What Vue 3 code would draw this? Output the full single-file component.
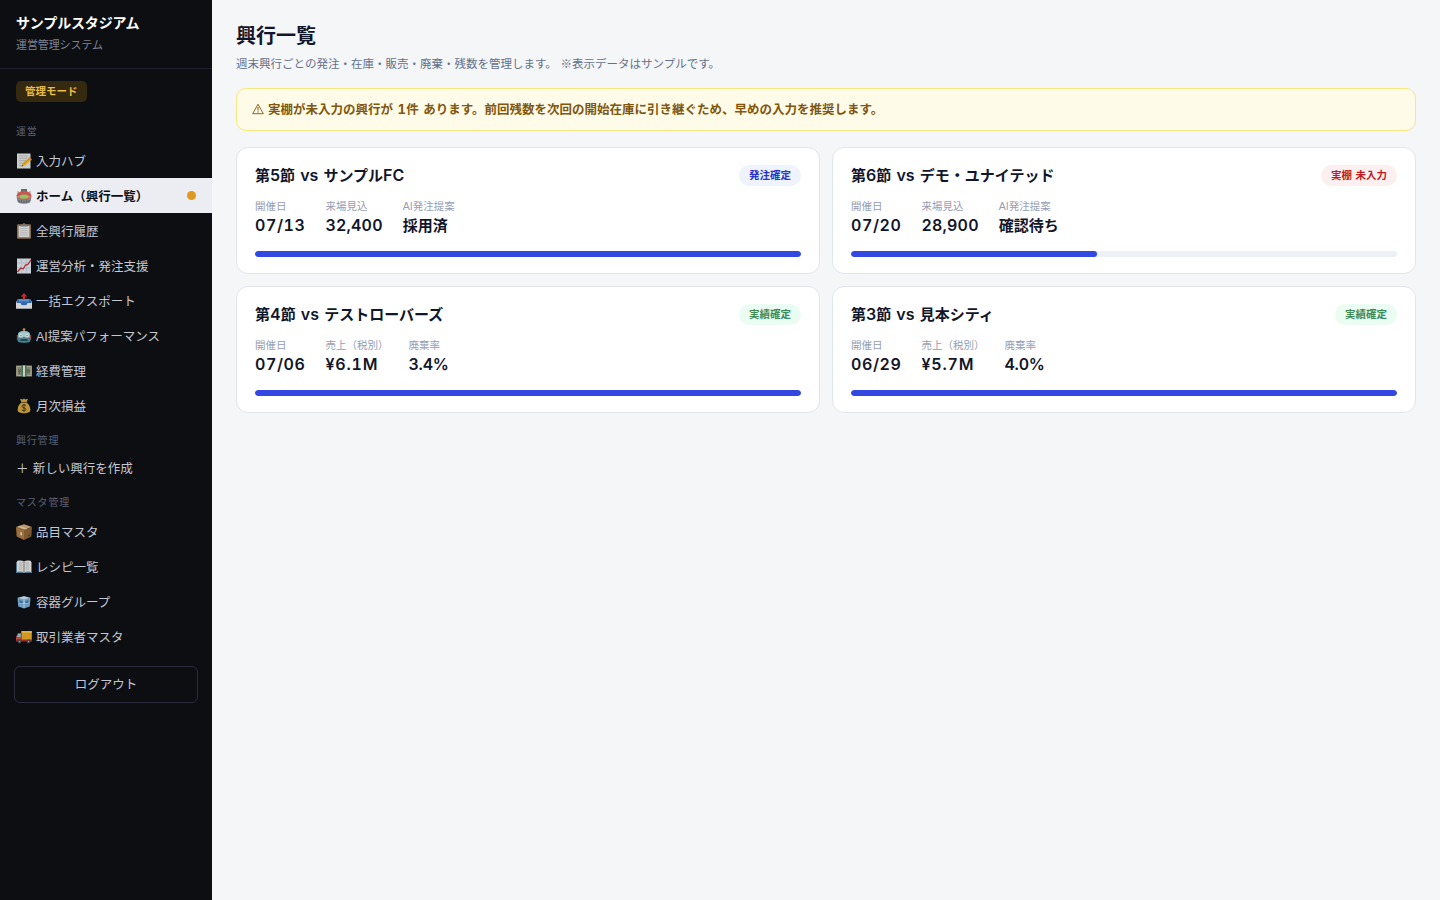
<script setup>
// 英数字だけ別書体にするため文字列を分割する
const split = (text) => text.match(/[\x20-\x7e¥]+|[^\x20-\x7e¥]+/g).map((t) => ({
  t,
  latin: /^[\x20-\x7e¥]/.test(t)
}));

// 値の種類ごとに字間を変える
const valueKind = (value) => {
  if (value.includes('/')) return 'date';
  if (value.startsWith('¥')) return 'money';
  return value.endsWith('%') ? 'rate' : '';
};

const navGroups = [
  {
    label: '運営',
    items: [
      { icon: 'memo', text: '入力ハブ' },
      { icon: 'stadium', text: 'ホーム（興行一覧）', active: true },
      { icon: 'clipboard', text: '全興行履歴' },
      { icon: 'chart', text: '運営分析・発注支援' },
      { icon: 'outbox', text: '一括エクスポート' },
      { icon: 'robot', text: 'AI提案パフォーマンス' },
      { icon: 'yen', text: '経費管理' },
      { icon: 'bag', text: '月次損益' }
    ]
  },
  {
    label: '興行管理',
    items: [{ text: '＋ 新しい興行を作成' }]
  },
  {
    label: 'マスタ管理',
    items: [
      { icon: 'box', text: '品目マスタ' },
      { icon: 'book', text: 'レシピ一覧' },
      { icon: 'ice', text: '容器グループ' },
      { icon: 'truck', text: '取引業者マスタ' }
    ]
  }
];

const events = [
  {
    title: '第5節 vs サンプルFC',
    badge: '発注確定',
    tone: 'blue',
    progress: 100,
    stats: [['開催日', '07/13'], ['来場見込', '32,400'], ['AI発注提案', '採用済']]
  },
  {
    title: '第6節 vs デモ・ユナイテッド',
    badge: '実棚 未入力',
    tone: 'red',
    progress: 45,
    stats: [['開催日', '07/20'], ['来場見込', '28,900'], ['AI発注提案', '確認待ち']]
  },
  {
    title: '第4節 vs テストローバーズ',
    badge: '実績確定',
    tone: 'green',
    progress: 100,
    stats: [['開催日', '07/06'], ['売上（税別）', '¥6.1M'], ['廃棄率', '3.4%']]
  },
  {
    title: '第3節 vs 見本シティ',
    badge: '実績確定',
    tone: 'green',
    progress: 100,
    stats: [['開催日', '06/29'], ['売上（税別）', '¥5.7M'], ['廃棄率', '4.0%']]
  }
];
</script>

<template>
  <div class="layout">
    <aside class="sidebar">
      <div class="brand">
        <div class="brand-name">サンプルスタジアム</div>
        <div class="brand-sub">運営管理システム</div>
      </div>
      <div class="mode-row"><span class="mode">管理モード</span></div>

      <nav v-for="group in navGroups" :key="group.label">
        <div class="nav-label">{{ group.label }}</div>
        <a
          v-for="item in group.items"
          :key="item.text"
          class="nav-item"
          :class="{ active: item.active, plain: !item.icon }"
        >
          <svg v-if="item.icon" class="icon" viewBox="0 0 16 16">
            <g v-if="item.icon === 'memo'">
              <path d="M1 .5h13.5v15H1z" fill="#dcdedc" />
              <path d="M3 3h9M3 5.3h8M3 7.6h7M3 10h4M3 12.5h3" stroke="#a3a8aa" stroke-width=".7" />
              <path d="M5.5 13.5l1-3.2 6-5.3 2.3 2.5-6 5.3z" fill="#eeb82c" />
              <path d="M6.8 11.6l6.5-5.8" stroke="#b77b14" stroke-width=".6" />
              <path d="M12.5 5l1.3-1 2.2 2.4-1.2 1.1z" fill="#dc7b75" />
              <path d="M5.5 13.5l.5-1.6 1.2 1.2z" fill="#333" />
            </g>
            <g v-else-if="item.icon === 'stadium'">
              <path d="M5 1h6v4H5z" fill="#59645a" />
              <path d="M2 3v3M14 3v3" stroke="#8a918f" />
              <path d="M.7 7.500c0 4 .6 6.800 2.300 7.400 3 1 7 1 10 0 1.700-.6 2.300-3.400 2.300-7.400z" fill="#777b80" />
              <ellipse cx="8" cy="7.300" rx="7.300" ry="4.300" fill="#c94b43" />
              <path d="M1 8.500c2-2 12-2 14 0-2 3-12 3-14 0z" fill="#e26a52" />
              <ellipse cx="8" cy="8.400" rx="4.300" ry="2" fill="#7bc957" />
              <path d="M3 12v2.300M5.500 12.500V15M8 12.700v2.500M10.500 12.500V15M13 12v2.300" stroke="#44494e" stroke-width=".8" />
            </g>
            <g v-else-if="item.icon === 'clipboard'">
              <rect x="1" y="1.200" width="14" height="14.500" rx="1" fill="#94764d" />
              <path d="M2.600 3h10.800v11.200H2.600z" fill="#dededf" />
              <path d="M4.500 5.500h7M4.500 7.500h7M4.500 9.500h7M4.500 11.500h7" stroke="#c2c3c6" stroke-width=".7" />
              <path d="M4.500 3.500V2l2-.6C6.800-.2 9.200-.2 9.500 1.400l2 .6v1.500z" fill="#7c8285" />
            </g>
            <g v-else-if="item.icon === 'chart'">
              <path d="M1 .5h14v15H1z" fill="#d8e0e8" />
              <path d="M1 5h14M1 10h14M5.500.5v15M10.500.5v15" stroke="#b1c1cf" stroke-width=".6" />
              <path d="M1.500 14l3.200-4 2.500 1L9.500 7l2.300-.5L15 1.800" fill="none" stroke="#bf2f38" stroke-width="1.300" />
            </g>
            <g v-else-if="item.icon === 'outbox'">
              <path d="M0 9l2-3h12l2 3v6.500H0z" fill="#d9dde1" />
              <path d="M1.500 6h13l1 4-3.500.5-1.500 2h-5l-1.500-2L.5 10z" fill="#366fbd" />
              <path d="M3 6h10v2.500H3z" fill="#5d9de1" />
              <path d="M0 10h4.500l1.200 2.300h4.600l1.200-2.300H16v5.500H0z" fill="#e5e8e9" />
              <path d="M8 0l3.200 3.400H9.300v3H6.700v-3H4.800z" fill="#d52d30" />
            </g>
            <g v-else-if="item.icon === 'robot'">
              <circle cx="8" cy="1.600" r="1.300" fill="#e3a32d" />
              <path d="M.8 7h1.600v5H.8zM13.600 7h1.600v5h-1.600z" fill="#b43d3e" />
              <path d="M2 6c.5-4.400 11.500-4.400 12 0l.4 7c-.5 2.500-12.300 2.500-12.800 0z" fill="#4c8996" />
              <path d="M2.300 5.600c1.500-3.600 9.900-3.600 11.400 0v3.800H2.300z" fill="#abd7dd" />
              <circle cx="5" cy="7.600" r="1.800" fill="#e8f4f2" />
              <circle cx="11" cy="7.600" r="1.800" fill="#e8f4f2" />
              <circle cx="5" cy="7.600" r=".7" fill="#356" />
              <circle cx="11" cy="7.600" r=".7" fill="#356" />
              <path d="M7.200 10h1.600l-.8-2z" fill="#d84738" />
              <path d="M4.500 12h7" stroke="#213e48" stroke-width="1.500" />
            </g>
            <g v-else-if="item.icon === 'yen'">
              <path d="M0 2.500h16v11H0z" fill="#8f9078" />
              <path d="M1 3.500h14v9H1z" fill="none" stroke="#c1bea0" stroke-width=".8" />
              <path d="M5.500 2.500h5v11h-5z" fill="#437f5f" />
              <path d="M7 2.500h2v11H7z" fill="#dce3d1" />
              <circle cx="12.200" cy="8" r="2" fill="#68705e" />
              <path d="M2 6l1.500 2L5 6M3.500 8v3M2.200 8.700h2.600" fill="none" stroke="#505847" stroke-width=".7" />
            </g>
            <g v-else-if="item.icon === 'bag'">
              <path d="M5.500 4.500L4 .8 6.500 1.500 8 .5l1.500 1 2.500-.7-1.500 3.700c3 2 4 5 3.800 8-.2 3.600-12.400 3.600-12.600 0-.2-3 .8-6 3.800-8z" fill="#cda13c" />
              <path d="M5 4.500h6" stroke="#75581d" stroke-width="1.100" />
              <path d="M10 7.700C8.500 6 6 6.600 6 8.300c0 2 4 1.200 4 3.100 0 1.700-2.800 2-4.200.4M8 6v7.800" fill="none" stroke="#493b23" stroke-width="1" />
            </g>
            <g v-else-if="item.icon === 'box'">
              <path d="M0 3l8-2.700L16 3l-8 3z" fill="#caa471" />
              <path d="M0 3l8 3v10l-7.300-3.400z" fill="#a9773e" />
              <path d="M16 3L8 6v10l7.300-3.400z" fill="#886034" />
              <path d="M3.500 1.800L11.400 4.700l-1.800.7L1.800 2.400z" fill="#e2caa2" />
              <path d="M4.200 8l1.800.6v3L4.200 11z" fill="#dbcbb3" />
              <path d="M12 11l2-.8v1.700l-2 .9z" fill="#60462b" />
            </g>
            <g v-else-if="item.icon === 'book'">
              <path d="M0 3h16v11H0z" fill="#527e9d" />
              <path d="M1 2c3-.8 5.500-.6 7 .5 1.500-1.100 4-1.300 7-.5v11c-3-.7-5.500-.5-7 .8-1.500-1.300-4-1.500-7-.8z" fill="#e2e3df" />
              <path d="M8 2.500v11" stroke="#777c7b" stroke-width="1" />
              <path d="M3 4h3.500M3 6h3.500M3 8h3.500M3 10h3.500M9.500 4H13M9.500 6H13M9.500 8H13M9.500 10H13" stroke="#a5aaa9" stroke-width=".7" />
            </g>
            <g v-else-if="item.icon === 'ice'">
              <path d="M1.500 3.800L8 2l6.500 1.800-.7 8.700L8 14.500l-5.800-2z" fill="#78a9ce" />
              <path d="M2 4l6 1.500L14 4 8 2.500z" fill="#c4ddea" />
              <path d="M8 5.500v8.500M3 9.500l10-.5" stroke="#b7d8ec" stroke-width="1" />
              <path d="M3.500 6.200l3 .8v2.500l-2.700-.5zM9.500 7l3-.8-.2 2.500-2.800.6z" fill="#3f76a5" />
            </g>
            <g v-else>
              <path d="M5.500 2h10.300v9.500H5.500z" fill="#e1a326" />
              <path d="M5.500 2h10.300v2H5.500z" fill="#f2bd3e" />
              <path d="M2 4h4v8H0V8z" fill="#cb4938" />
              <path d="M2.200 5h2.500v3H.9z" fill="#8ec4cf" />
              <path d="M0 10.500h16v2H0z" fill="#a62e28" />
              <circle cx="3.500" cy="12.500" r="1.900" fill="#454448" />
              <circle cx="12.500" cy="12.500" r="1.900" fill="#454448" />
              <circle cx="3.500" cy="12.500" r=".8" fill="#aaa" />
              <circle cx="12.500" cy="12.500" r=".8" fill="#aaa" />
            </g>
          </svg>
          <span class="nav-text"><span v-for="(p, i) in split(item.text)" :key="i" :class="{ ai: p.latin && p.t.trim() }">{{ p.t }}</span></span>
          <span v-if="item.active" class="dot"></span>
        </a>
      </nav>

      <button class="logout">ログアウト</button>
    </aside>

    <main class="main">
      <h1>興行一覧</h1>
      <p class="lead">週末興行ごとの発注・在庫・販売・廃棄・残数を管理します。 ※表示データはサンプルです。</p>

      <div class="notice">
        <svg class="warn" viewBox="0 0 12 12">
          <path d="M6 1.200L11.300 10.700H.7z" fill="none" stroke="currentColor" stroke-width=".9" stroke-linejoin="round" />
          <path d="M6 4v3.600M6 8.400v1.200" stroke="currentColor" stroke-width="1" />
        </svg>
        <span>実棚が未入力の興行が <span class="num">1</span>件 あります。前回残数を次回の開始在庫に引き継ぐため、早めの入力を推奨します。</span>
      </div>

      <div class="cards">
        <section v-for="ev in events" :key="ev.title" class="card">
          <div class="card-head">
            <h2><span v-for="(p, i) in split(ev.title)" :key="i" :class="{ latin: p.latin }">{{ p.t }}</span></h2>
            <span class="badge" :class="ev.tone">{{ ev.badge }}</span>
          </div>
          <div class="stats">
            <div v-for="[label, value] in ev.stats" :key="label">
              <div class="stat-label"><span v-for="(p, i) in split(label)" :key="i" :class="{ ai: p.latin }">{{ p.t }}</span></div>
              <div class="stat-value" :class="valueKind(value)"><span v-for="(p, i) in split(value)" :key="i" :class="{ latin: p.latin }">{{ p.t }}</span></div>
            </div>
          </div>
          <div class="track">
            <div class="fill" :style="{ width: ev.progress + '%' }"></div>
          </div>
        </section>
      </div>
    </main>
  </div>
</template>

<style>
body {
  margin: 0;
  background: #f4f6f8;
}
</style>

<style scoped>
.layout {
  display: flex;
  min-height: 100vh;
  font-family: "Noto Sans CJK JP", "Liberation Sans", sans-serif;
  color: #12162a;
}

.sidebar {
  width: 212px;
  flex-shrink: 0;
  background: #0d0e12;
  color: #c3c7d3;
}

.brand {
  height: 69px;
  box-sizing: border-box;
  padding: 12px 16px 0;
  border-bottom: 1px solid #1e1f2e;
}

.brand-name {
  font-size: 14px;
  line-height: 21px;
  font-weight: 700;
  letter-spacing: -0.15px;
  color: #fff;
}

.brand-sub {
  margin-top: 3px;
  font-size: 11px;
  line-height: 17px;
  letter-spacing: -0.1px;
  color: #7c8193;
}

.mode-row {
  display: flex;
  padding: 12px 16px 0;
}

.mode {
  padding: 2px 9px 4px;
  border-radius: 5px;
  background: #352a10;
  color: #e8bc48;
  font-size: 10.5px;
  line-height: 15px;
  font-weight: 700;
}

.nav-label {
  height: 29px;
  box-sizing: border-box;
  padding: 9px 16px 0;
  font-size: 10px;
  line-height: 15px;
  letter-spacing: 0.8px;
  color: #5b6073;
}

nav:nth-of-type(1) .nav-label {
  height: 41px;
  padding-top: 21px;
}

.nav-item {
  display: flex;
  align-items: center;
  height: 35px;
  box-sizing: border-box;
  padding: 0 16px;
  font-size: 12.5px;
}

.nav-item.plain {
  height: 33px;
  padding-bottom: 2px;
  word-spacing: 1.3px;
}

.nav-item.active {
  background: #ecedf2;
  color: #0d0e12;
  font-weight: 700;
}

.icon {
  width: 16px;
  height: 16px;
  margin-right: 4px;
  opacity: 0.92;
}

.nav-text {
  white-space: pre;
}

.ai {
  font-family: "Liberation Sans", sans-serif;
}

.dot {
  width: 9px;
  height: 9px;
  margin-left: auto;
  border-radius: 50%;
  background: #e0981f;
}

.logout {
  display: block;
  width: 184px;
  height: 37px;
  margin: 12px 14px 0;
  padding: 0 6px 2px;
  border: 1px solid #2a2b3c;
  border-radius: 6px;
  background: transparent;
  color: #c3c7d3;
  font-family: inherit;
  font-size: 12.5px;
}

.main {
  flex: 1;
  padding: 20px 24px;
}

h1 {
  margin: 0;
  font-size: 20px;
  line-height: 30px;
  font-weight: 700;
}

.lead {
  margin: 4px 0 0;
  font-size: 11.5px;
  line-height: 18px;
  word-spacing: 1.2px;
  color: #64708b;
}

.notice {
  display: flex;
  align-items: center;
  height: 43px;
  box-sizing: border-box;
  margin-top: 16px;
  padding: 0 16px 2px 15px;
  border: 1px solid #f7e683;
  border-radius: 10px;
  background: #fefbe8;
  color: #81570f;
  font-size: 12.5px;
  font-weight: 700;
  word-spacing: 1.6px;
}

.warn {
  width: 12px;
  height: 12px;
  margin-right: 4px;
}

.num {
  font-family: Inter, sans-serif;
  font-size: 13px;
  font-variant-numeric: tabular-nums;
  letter-spacing: 0.4px;
}

.cards {
  display: grid;
  grid-template-columns: 1fr 1fr;
  gap: 12px;
  margin-top: 16px;
}

.card {
  height: 127px;
  box-sizing: border-box;
  padding: 16px 18px;
  border: 1px solid #e2e5ed;
  border-radius: 12px;
  background: #fff;
}

.card-head {
  display: flex;
  justify-content: space-between;
  align-items: center;
  height: 23px;
}

h2 {
  margin: 0;
  padding-bottom: 2px;
  font-size: 15px;
  line-height: 21px;
  font-weight: 700;
  white-space: pre;
  word-spacing: 1.1px;
}

.latin {
  font-family: Inter, sans-serif;
  font-size: 16px;
  font-weight: 600;
  line-height: 1;
}

.badge {
  padding: 2px 10px 4px;
  border-radius: 11px;
  font-size: 10.5px;
  line-height: 15px;
  font-weight: 700;
  word-spacing: 1px;
}

.badge.blue {
  background: #eef3fe;
  color: #2b33c9;
}

.badge.red {
  background: #fbeff0;
  color: #bd1c24;
}

.badge.green {
  background: #ebfcf2;
  color: #3f8a59;
}

.stats {
  display: flex;
  gap: 20px;
  margin-top: 11px;
}

.stat-label {
  font-size: 10.5px;
  line-height: 16px;
  color: #949db3;
}

.stat-value {
  height: 22px;
  font-size: 15px;
  line-height: 22px;
  font-weight: 700;
}

.stat-value .latin {
  font-variant-numeric: tabular-nums;
  letter-spacing: 0.2px;
}

.stat-value.date .latin {
  letter-spacing: 0.6px;
}

.stat-value.money .latin {
  letter-spacing: 0.8px;
}

.stat-value.rate .latin {
  letter-spacing: -0.2px;
}

.track {
  height: 6px;
  margin-top: 15px;
  border-radius: 3px;
  background: #edf0f6;
  overflow: hidden;
}

.fill {
  height: 100%;
  border-radius: 3px;
  background: #3348e3;
}
</style>
